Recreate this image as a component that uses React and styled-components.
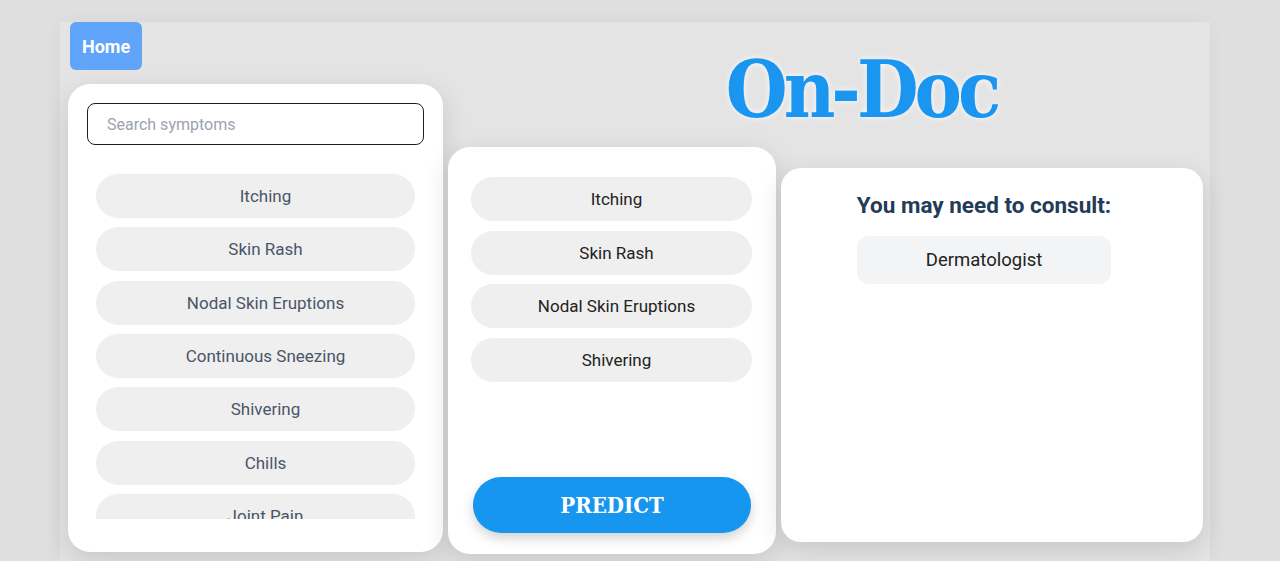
import styled, { createGlobalStyle } from "styled-components";

// ── Global ────────────────────────────────────────────────────────────────────

const GlobalStyle = createGlobalStyle`
  * { box-sizing: border-box; }
  body {
    margin: 0;
    background: #dfdfdf;
    font-family: Roboto, "Liberation Sans", sans-serif;
  }
`;

const SLAB = `"DejaVu Serif Condensed", "DejaVu Serif", serif`;

// ── Layout ────────────────────────────────────────────────────────────────────

const Shell = styled.div`
  width: 1150px;
  height: 539px;
  margin: 22px 0 0 60px;
  padding-left: 8px;
  background: #e4e4e4;
  box-shadow: 0 0 18px rgba(0, 0, 0, 0.04);
  display: flex;
  align-items: flex-start;
`;

const LeftColumn = styled.div`
  width: 375px;
  display: flex;
  flex-direction: column;
`;

const RightArea = styled.div`
  width: 755px;
  margin-left: 5px;
  display: flex;
  flex-direction: column;
`;

const Row = styled.div`
  display: flex;
  align-items: flex-start;
  gap: 5px;
`;

const Card = styled.div`
  background: #ffffff;
  border-radius: 22px;
  box-shadow: 0 8px 26px rgba(0, 0, 0, 0.13);
  display: flex;
  flex-direction: column;
`;

// ── Header bits ───────────────────────────────────────────────────────────────

const HomeButton = styled.button`
  align-self: flex-start;
  margin-left: 2px;
  height: 48px;
  padding: 0 12px;
  border: none;
  border-radius: 6px;
  background: #60a5fa;
  color: #ffffff;
  font-family: Roboto, sans-serif;
  font-size: 18px;
  font-weight: 700;
`;

const Title = styled.h1`
  margin: 0;
  height: 125px;
  padding: 28px 0 0 72px;
  text-align: center;
  font-family: ${SLAB};
  font-stretch: condensed;
  font-size: 79px;
  line-height: 79px;
  font-weight: 700;
  letter-spacing: -4px;
  color: #1a96f0;
  text-shadow: 0 0 6px rgba(255, 255, 255, 0.9);
`;

// ── Symptom picker ────────────────────────────────────────────────────────────

const PickerCard = styled(Card)`
  margin-top: 14px;
  height: 468px;
  padding: 19px 19px 33px;
`;

const Search = styled.input`
  width: 337px;
  height: 42px;
  border: 1px solid #1f1f1f;
  border-radius: 8px;
  padding: 0 19px;
  font-family: Roboto, sans-serif;
  font-size: 16px;
  outline: none;
  &::placeholder {
    color: #9ca3af;
  }
`;

const List = styled.ul`
  list-style: none;
  margin: 29px 9px 0;
  padding: 0;
  height: 345px;
  overflow: hidden;
  display: flex;
  flex-direction: column;
  gap: ${(p) => p.$gap}px;
`;

const Pill = styled.li`
  flex-shrink: 0;
  height: 44px;
  border-radius: 22px;
  background: #efefef;
  padding-left: ${(p) => p.$shift}px;
  display: flex;
  align-items: center;
  justify-content: center;
  font-size: 17px;
  color: ${(p) => p.$color};
`;

// ── Selected + predict ────────────────────────────────────────────────────────

const SelectedCard = styled(Card)`
  width: 328px;
  height: 407px;
  padding: 30px 24px 21px 23px;
`;

const SelectedList = styled(List)`
  margin: 0;
  height: auto;
  overflow: visible;
`;

const PredictButton = styled.button`
  margin: auto 0 0 2px;
  width: 278px;
  height: 56px;
  border: none;
  border-radius: 28px;
  background: #1796ef;
  color: #ffffff;
  font-family: ${SLAB};
  font-stretch: condensed;
  font-size: 22px;
  font-weight: 700;
  box-shadow: 0 5px 12px rgba(0, 0, 0, 0.18);
`;

// ── Result ────────────────────────────────────────────────────────────────────

const ResultCard = styled(Card)`
  width: 422px;
  height: 374px;
  margin-top: 21px;
  border-radius: 20px;
  padding: 22px 16px 0 0;
  align-items: center;
`;

const ResultHeading = styled.h2`
  margin: 0;
  font-size: 22.5px;
  line-height: 30px;
  font-weight: 700;
  color: #243b58;
`;

const Specialist = styled.div`
  margin-top: 16px;
  width: 254px;
  height: 48px;
  border-radius: 12px;
  background: #f3f4f6;
  display: flex;
  align-items: center;
  justify-content: center;
  font-size: 18.5px;
  color: #222222;
`;

// ── Data ──────────────────────────────────────────────────────────────────────

const SYMPTOMS = [
  "Itching", "Skin Rash", "Nodal Skin Eruptions", "Continuous Sneezing",
  "Shivering", "Chills", "Joint Pain", "Stomach Pain", "Acidity",
];
const SELECTED = ["Itching", "Skin Rash", "Nodal Skin Eruptions", "Shivering"];

// ── Page ──────────────────────────────────────────────────────────────────────

export default function App() {
  return (
    <>
      <GlobalStyle />
      <Shell>
        <LeftColumn>
          <HomeButton>Home</HomeButton>
          <PickerCard>
            <Search placeholder="Search symptoms" />
            <List $gap={9.33}>
              {SYMPTOMS.map((s) => (
                <Pill key={s} $color="#4a5568" $shift={20}>{s}</Pill>
              ))}
            </List>
          </PickerCard>
        </LeftColumn>

        <RightArea>
          <Title>On-Doc</Title>
          <Row>
            <SelectedCard>
              <SelectedList $gap={9.5}>
                {SELECTED.map((s) => (
                  <Pill key={s} $color="#222222" $shift={10}>{s}</Pill>
                ))}
              </SelectedList>
              <PredictButton>PREDICT</PredictButton>
            </SelectedCard>
            <ResultCard>
              <ResultHeading>You may need to consult:</ResultHeading>
              <Specialist>Dermatologist</Specialist>
            </ResultCard>
          </Row>
        </RightArea>
      </Shell>
    </>
  );
}
